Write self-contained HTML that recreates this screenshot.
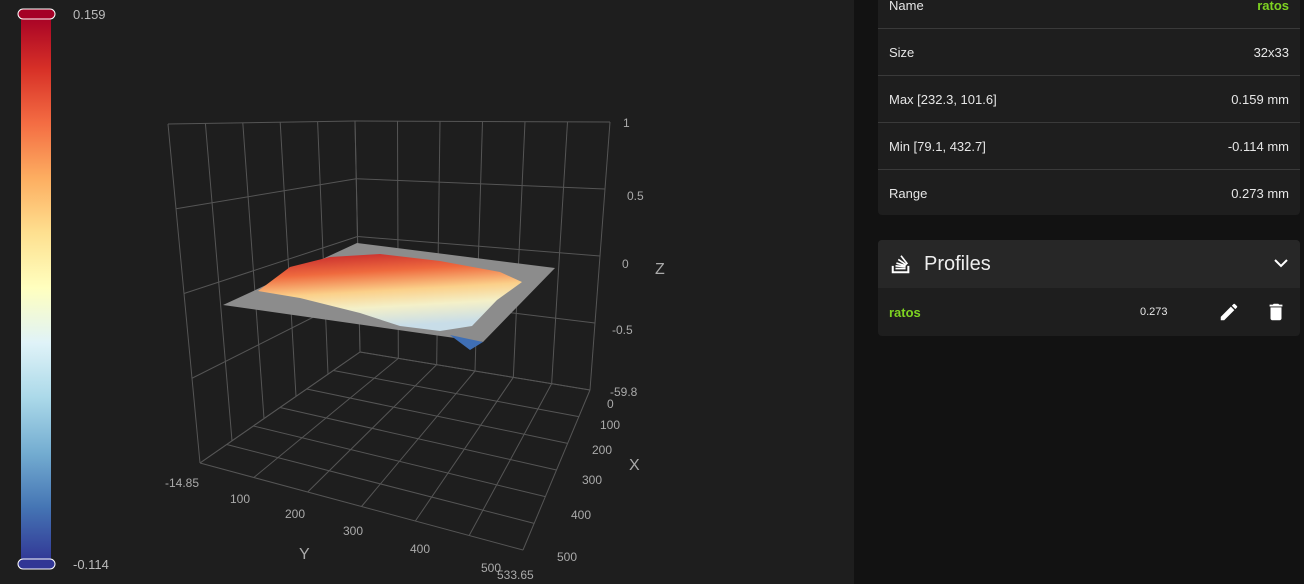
<!DOCTYPE html>
<html><head><meta charset="utf-8"><style>
body{margin:0;width:1304px;height:584px;overflow:hidden;background:#121212;font-family:"Liberation Sans",sans-serif;position:relative}
#left{position:absolute;left:0;top:0;width:854px;height:584px;background:#1e1e1e}
.card{position:absolute;left:878px;width:422px;background:#1e1e1e;border-radius:4px;color:#e6e6e6;font-size:13px}
.row{height:46px;border-top:1px solid #3a3a3a;display:flex;align-items:center;justify-content:space-between;padding:0 11px}
.g{color:#7ed321;font-weight:bold}
</style></head><body>
<div id="left">
<svg width="854" height="584" style="position:absolute;left:0;top:0">
<defs>
<linearGradient id="cb" x1="0" y1="0" x2="0" y2="1">
<stop offset="0" stop-color="#a50026"/><stop offset="0.1" stop-color="#d73027"/><stop offset="0.2" stop-color="#f46d43"/><stop offset="0.3" stop-color="#fdae61"/><stop offset="0.4" stop-color="#fee090"/><stop offset="0.5" stop-color="#ffffbf"/><stop offset="0.6" stop-color="#e0f3f8"/><stop offset="0.7" stop-color="#abd9e9"/><stop offset="0.8" stop-color="#74add1"/><stop offset="0.9" stop-color="#4575b4"/><stop offset="1" stop-color="#313695"/>
</linearGradient>
<linearGradient id="sf" x1="0" y1="0" x2="0.2" y2="1">
<stop offset="0" stop-color="#c0202a"/><stop offset="0.3" stop-color="#ef6a3e"/><stop offset="0.55" stop-color="#fbd08a"/><stop offset="0.75" stop-color="#f4f0c8"/><stop offset="1" stop-color="#c8dde8"/>
</linearGradient>
</defs>
<rect x="21" y="14" width="30" height="548" fill="url(#cb)"/>
<rect x="18" y="9" width="37" height="10" rx="5" fill="#a50026" stroke="#fff" stroke-width="1"/>
<rect x="18" y="559" width="37" height="10" rx="5" fill="#313695" stroke="#fff" stroke-width="1"/>
<text x="73" y="19" fill="#bbb" font-size="13">0.159</text>
<text x="73" y="569" fill="#bbb" font-size="13">-0.114</text>
<g id="grid" stroke="#555" stroke-width="1" fill="none"></g>
<polygon points="223,305 357,243 555,268 483,342" fill="#8c8c8c"/>
<polygon points="258,291 290,267 330,257 380,254 440,261 500,272 522,282 497,300 472,326 440,331 400,326 360,313 300,298" fill="url(#sf)"/>
<polygon points="450,335 483,342 470,350" fill="#3f6fb5"/>
<g fill="#aaa" font-size="12">
<text x="623" y="127">1</text><text x="627" y="200">0.5</text><text x="622" y="268">0</text><text x="612" y="334">-0.5</text>
<text x="610" y="396">-59.8</text><text x="607" y="408">0</text>
<text x="600" y="429">100</text><text x="592" y="454">200</text><text x="582" y="484">300</text><text x="571" y="519">400</text><text x="557" y="561">500</text>
<text x="165" y="487">-14.85</text><text x="230" y="503">100</text><text x="285" y="518">200</text><text x="343" y="535">300</text><text x="410" y="553">400</text><text x="481" y="572">500</text><text x="497" y="579">533.65</text>
</g>
<g fill="#aaa" font-size="16"><text x="655" y="274">Z</text><text x="629" y="470">X</text><text x="299" y="559">Y</text></g>
</svg>
</div>
<div class="card" style="top:-18px;height:233px">
<div class="row" style="border-top:none"><span>Name</span><span class="g">ratos</span></div>
<div class="row"><span>Size</span><span>32x33</span></div>
<div class="row"><span>Max [232.3, 101.6]</span><span>0.159 mm</span></div>
<div class="row"><span>Min [79.1, 432.7]</span><span>-0.114 mm</span></div>
<div class="row"><span>Range</span><span>0.273 mm</span></div>
</div>
<div class="card" style="top:240px;height:96px">
<div style="height:48px;background:#272727;border-radius:4px 4px 0 0;display:flex;align-items:center;padding:0 12px;font-size:20px;color:#eee">
<svg width="22" height="22" viewBox="0 0 24 24" style="margin-right:12px"><path d="M3 14v7h17v-7" stroke="#fff" stroke-width="2.2" fill="none"/><path d="M6 17h11M6 14l11 1M7 11l10 3M9 7l9 6M12 3l7 9" stroke="#fff" stroke-width="1.8"/></svg>
Profiles<span style="margin-left:auto;font-size:16px">
<svg width="14" height="10" viewBox="0 0 14 10"><path d="M1 2l6 6 6-6" stroke="#fff" stroke-width="2" fill="none"/></svg></span></div>
<div style="height:48px;display:flex;align-items:center;padding:0 11px;position:relative">
<span class="g">ratos</span>
<span style="position:absolute;left:262px;font-size:11px">0.273</span>
<svg style="position:absolute;left:340px;top:13px" width="22" height="22" viewBox="0 0 24 24"><path fill="#fff" d="M3 17.25V21h3.75L17.81 9.94l-3.75-3.75L3 17.25zM20.71 7.04a1 1 0 000-1.41l-2.340-2.34a1 1 0 00-1.41 0l-1.83 1.83 3.75 3.75 1.83-1.830z"/></svg>
<svg style="position:absolute;left:387px;top:13px" width="22" height="22" viewBox="0 0 24 24"><path fill="#fff" d="M6 19c0 1.1.9 2 2 2h8c1.1 0 2-.9 2-2V7H6v12zM19 4h-3.5l-1-1h-5l-1 1H5v2h14V4z"/></svg>
</div></div>
<script>
var g=document.getElementById('grid');
function L(a,b){var l=document.createElementNS('http://www.w3.org/2000/svg','line');l.setAttribute('x1',a[0]);l.setAttribute('y1',a[1]);l.setAttribute('x2',b[0]);l.setAttribute('y2',b[1]);g.appendChild(l);}
function lp(a,b,t){return[a[0]+(b[0]-a[0])*t,a[1]+(b[1]-a[1])*t];}
function quad(p0,p1,p2,p3,nu,nv){for(var i=0;i<=nu;i++){var t=i/nu;L(lp(p0,p1,t),lp(p3,p2,t));}for(var j=0;j<=nv;j++){var s=j/nv;L(lp(p0,p3,s),lp(p1,p2,s));}}
var A=[168,124],B=[355,121],C=[360,352],D=[200,463],E=[610,122],F=[590,390],G=[523,550];
quad(A,B,C,D,5,4);quad(B,E,F,C,6,4);quad(D,C,F,G,6,6);
</script>
</body></html>
